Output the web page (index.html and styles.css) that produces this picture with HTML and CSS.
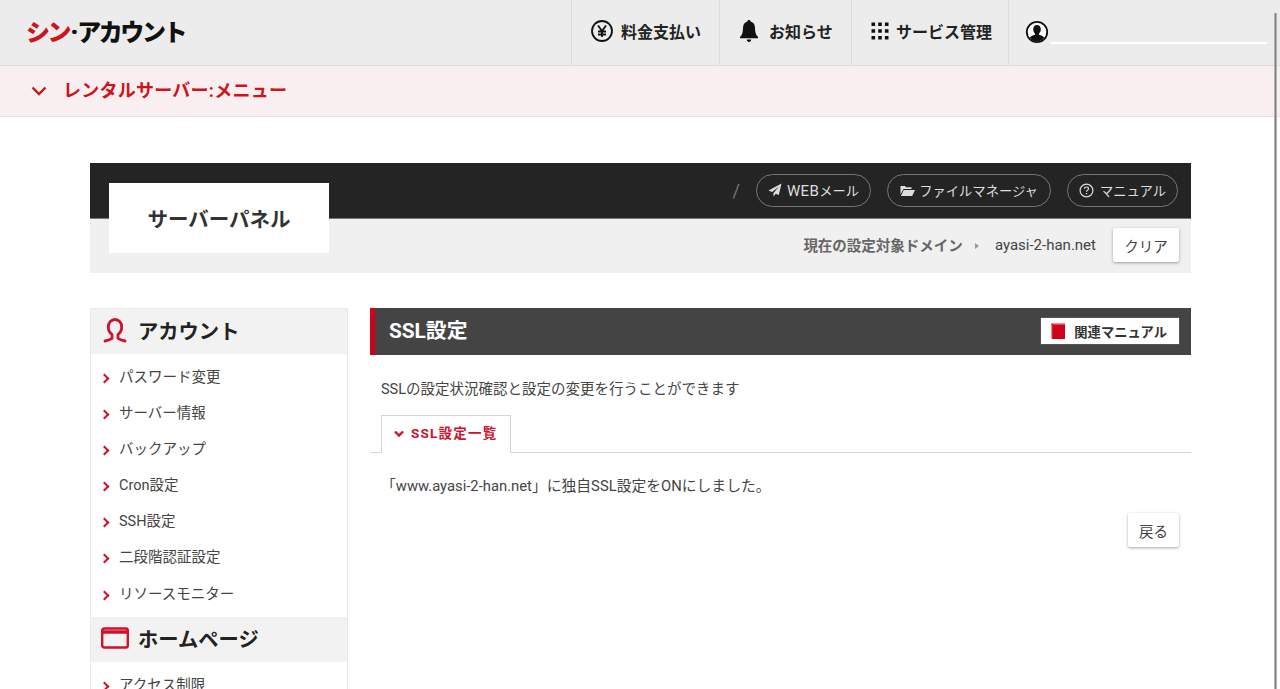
FILE: index.html
```html
<!DOCTYPE html>
<html lang="ja">
<head>
    <meta charset="UTF-8">
    <meta name="viewport" content="width=device-width, initial-scale=1.0">
    <title>サーバーパネル</title>
    <link rel="stylesheet" href="styles.css">
</head>
<body>
    <header class="topbar">
        <div class="logo"><span class="logo-red">シン</span><span class="logo-dot">·</span>アカウント</div>
        <nav class="topnav">
            <a class="topnav-item">
                <svg width="24" height="24" viewBox="0 0 24 24" fill="none" stroke="#111" stroke-width="1.8"><circle cx="12" cy="12" r="10"/><path d="M8 6.5l4 5.5 4-5.500M12 12v6M8 12.500h8M8 15.500h8"/></svg>
                料金支払い
            </a>
            <a class="topnav-item">
                <svg width="24" height="24" viewBox="0 0 24 24" fill="#111"><path d="M12 1c1 0 1.600.7 1.600 1.600 3 .8 4.400 3.300 4.400 6.400 0 4.500 1 7.200 3 9v1.200H3V18c2-1.800 3-4.500 3-9 0-3.100 1.400-5.600 4.400-6.400C10.400 1.700 11 1 12 1z"/><path d="M9.800 20.500h4.400c0 1.500-1 2.500-2.200 2.500s-2.200-1-2.200-2.500z"/></svg>
                お知らせ
            </a>
            <a class="topnav-item">
                <svg width="18" height="18" viewBox="0 0 18 18" fill="#111"><path d="M.5.5h3.600v3.600H.5zM7.200.5h3.600v3.600H7.200zM13.900.5h3.600v3.600h-3.600zM.5 7.200h3.600v3.600H.5zM7.200 7.200h3.600v3.600H7.200zM13.900 7.200h3.600v3.600h-3.600zM.5 13.900h3.600v3.600H.5zM7.200 13.900h3.600v3.600H7.200zM13.900 13.900h3.600v3.600h-3.600z"/></svg>
                サービス管理
            </a>
            <div class="topnav-user">
                <svg width="24" height="24" viewBox="0 0 24 24"><circle cx="12" cy="12" r="10.200" fill="#fff" stroke="#111" stroke-width="1.800"/><path fill="#111" d="M12 5c2.400 0 3.800 1.800 3.800 4.200 0 1.800-.8 3.400-1.800 4.300v1.300c2.400.8 4.400 1.600 5.200 3A10 10 0 0 1 12 21.500a10 10 0 0 1-7.200-3.700c.8-1.400 2.800-2.200 5.200-3v-1.300c-1-.9-1.800-2.500-1.800-4.300C8.200 6.800 9.600 5 12 5z"/></svg>
                <span class="user-line"></span>
            </div>
        </nav>
    </header>

    <div class="submenu">
        <svg width="16" height="10" viewBox="0 0 16 10" fill="none" stroke="#d0121b" stroke-width="2.400"><path d="M1.500 1.500L8 8l6.500-6.500"/></svg>
        <span>レンタルサーバー:メニュー</span>
    </div>

    <main class="wrap">
        <section class="panel-head">
            <div class="panel-dark">
                <span class="slash">/</span>
                <a class="pill">
                    <svg width="14" height="14" viewBox="0 0 14 14" fill="#ddd"><path d="M13.500.5L.5 7.500l3.600 1.500L11 3.500 5.500 10v3.500l2.300-2.800 3 1.300z"/></svg>
                    <span><span class="pill-latin">WEB</span>メール</span>
                </a>
                <a class="pill pill-files">
                    <svg width="15" height="13" viewBox="0 0 15 13" fill="#ddd"><path d="M.5 2h4.500l1.200 1.300h5.300v1.700H3.500L.5 10.500zM3.800 6H15l-2.800 6H.9z"/></svg>
                    ファイルマネージャ
                </a>
                <a class="pill pill-manual">
                    <svg width="15" height="15" viewBox="0 0 15 15" fill="none" stroke="#ddd" stroke-width="1.200"><circle cx="7.500" cy="7.500" r="6.400"/><path d="M5.500 5.800c0-1.100.9-1.800 2-1.800s2 .7 2 1.700c0 1.500-2 1.500-2 3M7.500 10v1.200"/></svg>
                    マニュアル
                </a>
            </div>
            <div class="panel-light">
                <span class="domain-label">現在の設定対象ドメイン</span>
                <span class="domain-arrow"></span>
                <span class="domain-name">ayasi-2-han.net</span>
                <button class="btn btn-clear">クリア</button>
            </div>
            <div class="panel-title">サーバーパネル</div>
        </section>

        <div class="columns">
            <aside class="sidebar">
                <h2 class="side-head">
                    <svg width="28" height="26" viewBox="0 0 28 26" fill="none" stroke="#d0112b" stroke-width="2.800" stroke-linecap="round"><path d="M4 24c2.500-.4 4.800-1.200 7-2.700v-3.800c-2.500-1.900-3.700-4.500-3.700-7.500 0-4.200 2.800-7.500 6.700-7.500s6.700 3.300 6.700 7.500c0 3-1.200 5.600-3.700 7.500v3.800c2.200 1.500 4.500 2.300 7 2.700"/></svg>
                    アカウント
                </h2>
                <ul class="side-list">
                    <li>パスワード変更</li>
                    <li>サーバー情報</li>
                    <li>バックアップ</li>
                    <li>Cron設定</li>
                    <li>SSH設定</li>
                    <li>二段階認証設定</li>
                    <li>リソースモニター</li>
                </ul>
                <h2 class="side-head">
                    <svg width="28" height="22" viewBox="0 0 28 22" fill="none" stroke="#d0112b"><rect x="1.200" y="1.500" width="25.600" height="19" rx="2" stroke-width="2.400"/><path d="M1 5h26" stroke-width="3.500"/></svg>
                    ホームページ
                </h2>
                <ul class="side-list">
                    <li>アクセス制限</li>
                </ul>
            </aside>

            <section class="content">
                <div class="content-head">
                    <h1>SSL設定</h1>
                    <a class="manual-link">
                        <svg width="14" height="16" viewBox="0 0 14 16"><path fill="#d0021b" d="M2 0h12v16H2C.8 16 0 15.200 0 14V2C0 .8.800 0 2 0z"/><path fill="#ee8d96" d="M1.200 0H14v1.400H1.200zM0 2h1.200v13H0z"/></svg>
                        関連マニュアル
                    </a>
                </div>
                <p class="lead">SSLの設定状況確認と設定の変更を行うことができます</p>
                <div class="tabs">
                    <div class="tab">
                        <svg width="10" height="8" viewBox="0 0 10 8" fill="none" stroke="#d0112b" stroke-width="2.400"><path d="M1 1.500l4 4 4-4"/></svg>
                        SSL設定一覧
                    </div>
                </div>
                <p class="message">「www.ayasi-2-han.net」に独自SSL設定をONにしました。</p>
                <div class="actions">
                    <button class="btn">戻る</button>
                </div>
            </section>
        </div>
    </main>
    <div class="edge"></div>
</body>
</html>
```

FILE: styles.css
```css
* {
    box-sizing: border-box;
    margin: 0;
    padding: 0;
}

html, body {
    height: 689px;
    overflow: hidden;
}

body {
    background: #fff;
    color: #333;
    font-family: Roboto, "Liberation Sans", "Noto Sans CJK JP", sans-serif;
    font-size: 14.500px;
}

/* ヘッダー */
.topbar {
    display: flex;
    justify-content: space-between;
    height: 66px;
    background: #ececec;
    border-bottom: 1px solid #dcdcdc;
}

.logo {
    padding: 14px 0 0 26px;
    font-size: 24px;
    line-height: 36px;
    font-weight: 900;
    letter-spacing: -2.400px;
    color: #111;
}

.logo-red {
    color: #d0121b;
}

.logo-dot {
    margin: 0 1px;
    font-size: 26px;
}

.topnav {
    display: flex;
}

.topnav-item {
    display: flex;
    align-items: center;
    gap: 8px;
    padding: 0 0 3px 17px;
    border-left: 1px solid #dcdcdc;
    font-size: 16px;
    font-weight: 700;
    color: #222;
}

.topnav-item:nth-child(1) {
    width: 148px;
    padding-left: 18px;
    gap: 7px;
}

.topnav-item:nth-child(2) {
    width: 132px;
}

.topnav-item:nth-child(3) {
    width: 157px;
    padding-left: 19px;
    gap: 7px;
}

.topnav-user {
    display: flex;
    align-items: center;
    width: 272px;
    padding: 0 0 2px 16px;
    border-left: 1px solid #dcdcdc;
}

.user-line {
    width: 216px;
    height: 2px;
    margin: 22px 0 0 2px;
    background: #fff;
}

/* サブメニュー */
.submenu {
    display: flex;
    align-items: center;
    gap: 16px;
    height: 51px;
    padding-left: 31px;
    background: #f9eff0;
    border-bottom: 1px solid #eadfe0;
    color: #d0121b;
    font-size: 18px;
    font-weight: 700;
    letter-spacing: 0.250px;
}

.submenu span {
    padding-bottom: 4px;
}

.wrap {
    width: 1101px;
    margin: 46px 0 0 90px;
}

/* パネル上部 */
.panel-head {
    position: relative;
    height: 110px;
}

.panel-dark {
    display: flex;
    align-items: center;
    justify-content: flex-end;
    gap: 16px;
    height: 56px;
    padding: 0 13px 1px 0;
    background: #242424;
    border-bottom: 1px solid #777;
}

.slash {
    color: #777;
    font-size: 18px;
}

.pill {
    display: flex;
    align-items: center;
    gap: 5px;
    height: 33px;
    padding: 0 11px;
    border: 1px solid #777;
    border-radius: 17px;
    color: #ddd;
    font-size: 13.300px;
}

.pill-files {
    gap: 4px;
    padding: 0 12px;
}

.pill-manual {
    gap: 6px;
}

.pill-latin {
    font-size: 15px;
    letter-spacing: 0.400px;
}

.panel-light {
    display: flex;
    align-items: center;
    justify-content: flex-end;
    height: 54px;
    padding: 0 12px 2px 0;
    background: #f0f0f0;
}

.domain-label {
    padding-bottom: 2px;
    color: #666;
    font-weight: 700;
}

.domain-arrow {
    width: 0;
    height: 0;
    margin: 2px 16px 0 12px;
    border-left: 4px solid #999;
    border-top: 3px solid transparent;
    border-bottom: 3px solid transparent;
}

.domain-name {
    margin-right: 17px;
    color: #444;
    font-size: 15px;
}

.panel-title {
    position: absolute;
    left: 19px;
    top: 20px;
    width: 220px;
    height: 70px;
    background: #fff;
    color: #333;
    font-size: 20.500px;
    font-weight: 700;
    line-height: 74px;
    text-align: center;
}

.btn {
    height: 34px;
    padding: 0 11px;
    background: #fff;
    border: 0;
    border-radius: 2px;
    box-shadow: 0 1px 3px rgba(0, 0, 0, 0.35);
    color: #444;
    font-family: inherit;
    font-size: 14.500px;
}

.btn-clear {
    width: 66px;
    padding: 0;
}

/* 2カラム */
.columns {
    display: flex;
    gap: 22px;
    margin-top: 35px;
}

.sidebar {
    flex: 0 0 258px;
    border: 1px solid #e8e8e8;
    border-bottom: 0;
}

.side-head {
    display: flex;
    align-items: center;
    gap: 9px;
    height: 45px;
    padding: 0 0 2px 10px;
    background: #f2f2f2;
    color: #222;
    font-size: 20.300px;
    font-weight: 700;
}

.side-head:first-child {
    padding-bottom: 4px;
}

.side-list {
    list-style: none;
    padding: 6px 0 4px;
}

.side-list li {
    position: relative;
    height: 36.100px;
    padding-left: 28px;
    color: #444;
    line-height: 36px;
}

.side-list li::before {
    content: "";
    position: absolute;
    left: 10px;
    top: 15px;
    width: 5px;
    height: 5px;
    border-top: 2.500px solid #d0112b;
    border-right: 2.500px solid #d0112b;
    transform: rotate(45deg);
}

.content {
    flex: 1;
}

.content-head {
    display: flex;
    align-items: center;
    justify-content: space-between;
    height: 47px;
    padding: 0 12px 0 14px;
    background: #444;
    border-left: 5px solid #d0021b;
}

.content-head h1 {
    padding-bottom: 5px;
    color: #fff;
    font-size: 20.800px;
    font-weight: 700;
}

.manual-link {
    display: flex;
    align-items: center;
    gap: 9px;
    height: 26px;
    margin-bottom: 1px;
    padding: 0 12px 0 10px;
    background: #fff;
    box-shadow: 0 0 1px #aaa;
    color: #333;
    font-size: 13.300px;
    font-weight: 700;
}

.lead {
    margin: 25px 0 0 11px;
    color: #444;
    line-height: 20px;
}

.tabs {
    height: 38px;
    margin-top: 15px;
    padding-left: 11px;
    border-bottom: 1px solid #d5d5d5;
}

.tab {
    display: flex;
    align-items: center;
    gap: 7px;
    width: 130px;
    height: 38px;
    padding: 0 0 5px 12px;
    background: #fff;
    border: 1px solid #d5d5d5;
    border-bottom: 0;
    color: #d0112b;
    font-size: 13.500px;
    font-weight: 700;
    letter-spacing: 1.200px;
}

.tab svg {
    margin-top: 3px;
}

.message {
    margin: 23px 0 0 11px;
    color: #444;
    font-size: 14.800px;
    line-height: 20px;
}

.actions {
    display: flex;
    justify-content: flex-end;
    margin: 17px 12px 0 0;
}

.edge {
    position: absolute;
    left: 1274px;
    top: 13px;
    bottom: 0;
    width: 3px;
    background: linear-gradient(to right, #ccc, #808080, #ccc);
}
```
